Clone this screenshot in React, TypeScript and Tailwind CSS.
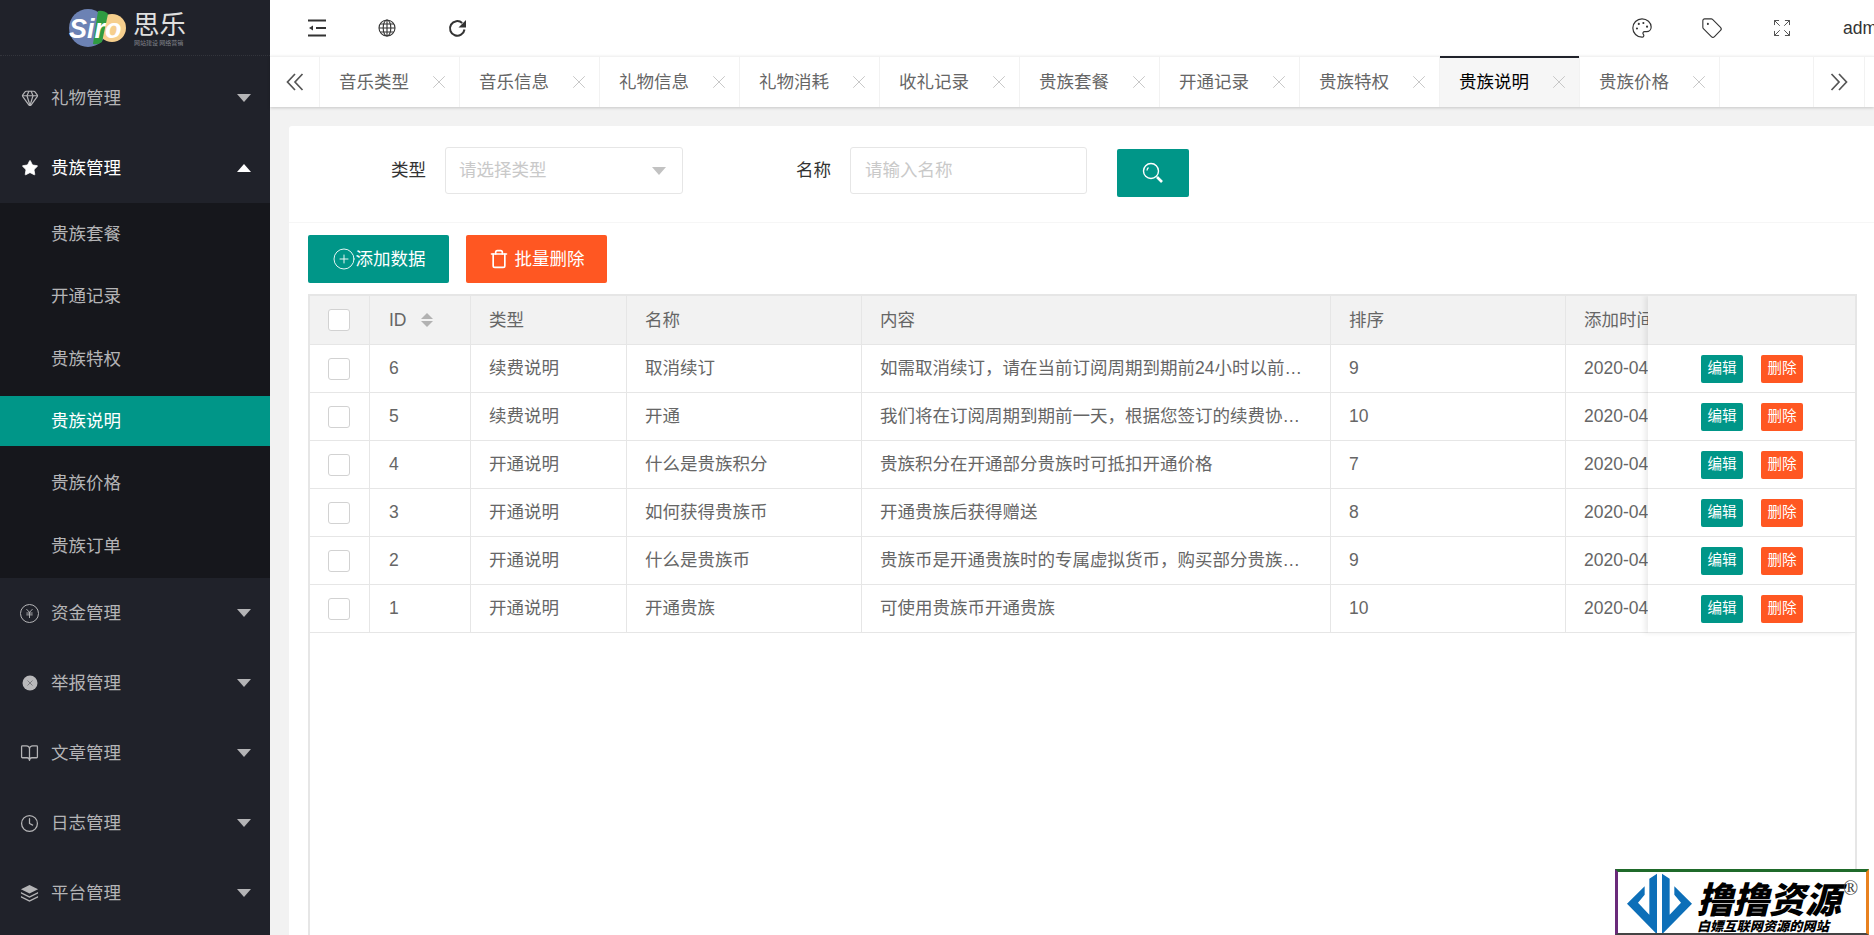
import React from "react";
import { Palette, Tag, Expand, X, Gem, Star, JapaneseYen, BookOpen, Clock, CirclePlus, Trash } from "lucide-react";

const FONT = "font-['Liberation_Sans','Noto_Sans_CJK_SC',sans-serif]";

const Caret = ({ up, light }: { up?: boolean; light?: boolean }) => (
  <span
    className={`w-0 h-0 border-x-[7.5px] border-x-transparent ${
      up ? "border-b-[8px] border-b-white" : light ? "border-t-[8px] border-t-[#c2c2c2]" : "border-t-[8px] border-t-[#b4b4b6]"
    }`}
  />
);

const CircleXFilled = () => (
  <svg width="18" height="18" viewBox="0 0 18 18">
    <circle cx="9" cy="9" r="7.5" fill="#b8b8ba" />
    <path d="M6.5 6.5l5 5M11.5 6.5l-5 5" stroke="#7b7c80" strokeWidth="1" />
  </svg>
);

const YenCircle = () => (
  <span className="flex items-center justify-center w-[19px] h-[19px] rounded-full border border-[#b4b4b6]">
    <JapaneseYen size={11} strokeWidth={2} />
  </span>
);

const LayersFilled = () => (
  <svg width="20" height="19" viewBox="0 0 20 19" fill="currentColor">
    <path d="M10 0.5L19 5l-9 4.5L1 5z" />
    <path d="M1 8l9 4.5L19 8v1.6l-9 4.5-9-4.5z" />
    <path d="M1 12l9 4.5 9-4.5v1.6l-9 4.5-9-4.5z" />
  </svg>
);

const MenuItem = ({ icon, label, open }: { icon: React.ReactNode; label: string; open?: boolean }) => (
  <div className="h-[70px] flex items-center pl-[20px] pr-[19px] text-[17.5px]">
    <span className={`w-[19px] flex justify-center mr-[12px] ${open ? "text-white" : "text-[#b4b4b6]"}`}>{icon}</span>
    <span className={`flex-1 ${open ? "text-white" : "text-[#b4b4b6]"}`}>{label}</span>
    <Caret up={open} />
  </div>
);

const subItems = ["贵族套餐", "开通记录", "贵族特权", "贵族说明", "贵族价格", "贵族订单"];

const Logo = () => (
  <div className="h-[56px] flex items-center justify-start pl-[66px] border-b border-dotted border-[#33353c]">
    <svg width="122" height="48" viewBox="0 0 122 48">
      <circle cx="22" cy="24" r="19" fill="#6c82b4" />
      <circle cx="46" cy="24" r="14" fill="#f6cf8d" />
      <path d="M32 7 Q38 6 42 10 L36 38 Q32 41 27 40 Z" fill="#2f9b41" />
      <text x="3" y="34" fill="#fff" fontSize="27" fontWeight="700" fontStyle="italic" fontFamily="Liberation Sans">Siro</text>
      <text x="67" y="30" fill="#e0e0e0" fontSize="26.5" fontFamily="Noto Sans CJK SC">思乐</text>
      <text x="68" y="41" fill="#80828a" fontSize="6" fontFamily="Noto Sans CJK SC">网站建设 网络营销</text>
    </svg>
  </div>
);

const Sidebar = () => (
  <aside className="w-[270px] shrink-0 h-full bg-[#20222a] overflow-hidden">
    <Logo />
    <div className="pt-[7px]">
      <MenuItem icon={<Gem size={18} strokeWidth={1.6} />} label="礼物管理" />
      <MenuItem icon={<Star size={18} fill="currentColor" strokeWidth={1} />} label="贵族管理" open />
      <div className="bg-[#16171c] h-[375px] flex flex-col pt-[6px]">
        {subItems.map((s) => (
          <div
            key={s}
            className={`h-[50px] mb-[12.4px] shrink-0 flex items-center pl-[51px] text-[17.5px] ${
              s === "贵族说明" ? "bg-[#009688] text-white" : "text-[#b4b4b6]"
            }`}
          >
            {s}
          </div>
        ))}
      </div>
      <MenuItem icon={<YenCircle />} label="资金管理" />
      <MenuItem icon={<CircleXFilled />} label="举报管理" />
      <MenuItem icon={<BookOpen size={20} strokeWidth={1.6} />} label="文章管理" />
      <MenuItem icon={<Clock size={19} strokeWidth={1.6} />} label="日志管理" />
      <MenuItem icon={<LayersFilled />} label="平台管理" />
    </div>
  </aside>
);

const IndentIcon = () => (
  <svg width="20" height="18" viewBox="0 0 20 18" fill="none" stroke="currentColor" strokeWidth="2">
    <path d="M1 1.5h18M9 9h10M1 16.5h18" />
    <path d="M2 9l4-2.5v5z" fill="currentColor" stroke="none" />
  </svg>
);

const GlobeIcon = () => (
  <svg width="18" height="18" viewBox="0 0 18 18" fill="none" stroke="currentColor" strokeWidth="1.1">
    <circle cx="9" cy="9" r="8" />
    <ellipse cx="9" cy="9" rx="3.8" ry="8" />
    <path d="M9 1v16M1 9h16M2.2 5h13.6M2.2 13h13.6" />
  </svg>
);

const ReloadIcon = () => (
  <svg width="19" height="19" viewBox="0 0 19 19" fill="none" stroke="currentColor" strokeWidth="2">
    <path d="M16.5 10.5A7.3 7.3 0 1 1 14.2 4" />
    <path d="M18 1v7.5h-7.5z" fill="currentColor" stroke="none" />
  </svg>
);

const TopBar = () => (
  <div className="h-[56px] flex items-center bg-white text-[#333]">
    <div className="w-[70px] flex justify-center ml-[12px]"><IndentIcon /></div>
    <div className="w-[70px] flex justify-center"><GlobeIcon /></div>
    <div className="w-[70px] flex justify-center"><ReloadIcon /></div>
    <div className="flex-1" />
    <div className="w-[70px] flex justify-center"><Palette size={22} strokeWidth={1.3} /></div>
    <div className="w-[70px] flex justify-center"><Tag size={22} strokeWidth={1.2} /></div>
    <div className="w-[70px] flex justify-center text-[#555]"><Expand size={20} strokeWidth={1.2} /></div>
    <div className="w-[57px] pl-[26px] overflow-hidden whitespace-nowrap text-[17.5px]">admin</div>
  </div>
);

const tabs = ["音乐类型", "音乐信息", "礼物信息", "礼物消耗", "收礼记录", "贵族套餐", "开通记录", "贵族特权", "贵族说明", "贵族价格"];

const DoubleChevron = ({ right }: { right?: boolean }) => (
  <svg width="18" height="18" viewBox="0 0 18 18" fill="none" stroke="currentColor" strokeWidth="1.7" className={right ? "rotate-180" : ""}>
    <path d="M9 1L1.5 9 9 17M16.5 1L9 9l7.5 8" />
  </svg>
);

const TabBar = () => (
  <div className="h-[51px] shrink-0 flex bg-white border-t border-[#f2f2f2] shadow-[0_1px_3px_rgba(0,0,0,0.18)] relative z-10 text-[17.5px] text-[#666]">
    <div className="w-[50px] border-r border-[#f2f2f2] flex items-center justify-center text-[#555]">
      <DoubleChevron />
    </div>
    {tabs.map((t) => {
      const active = t === "贵族说明";
      return (
        <div
          key={t}
          className={`relative w-[140px] flex items-center pl-[19px] border-r border-[#f2f2f2] ${active ? "bg-[#f6f6f6] text-black" : ""}`}
        >
          {active && <span className="absolute -top-px left-0 right-0 h-[2px] bg-[#20222a]" />}
          <span className="flex-1">{t}</span>
          <X size={22} strokeWidth={0.9} className="mr-[9px] text-[#bcbcbc]" />
        </div>
      );
    })}
    <div className="flex-1" />
    <div className="w-[50px] border-x border-[#f2f2f2] flex items-center justify-center text-[#555] mr-[9px] box-content">
      <DoubleChevron right />
    </div>
  </div>
);

const SearchIcon = () => (
  <svg width="22" height="22" viewBox="0 0 22 22" fill="none" stroke="currentColor">
    <circle cx="9" cy="9" r="7.5" strokeWidth="1.4" />
    <path d="M5 8.5a4 4 0 0 1 1.5-3" strokeWidth="1.2" />
    <path d="M15 15l5 5" strokeWidth="2.6" />
  </svg>
);

const SearchForm = () => (
  <div className="h-[97px] border-b border-[#f6f6f6] flex items-center text-[17.5px] text-[#333] pb-[7px]">
    <span className="ml-[102px] w-[36px] whitespace-nowrap">类型</span>
    <div className="ml-[18px] w-[238px] h-[47px] border border-[#e6e6e6] rounded-[3px] flex items-center pl-[13px] pr-[16px] text-[#c9c9c9] justify-between">
      <span>请选择类型</span>
      <Caret light />
    </div>
    <span className="ml-[113px] w-[36px] whitespace-nowrap">名称</span>
    <div className="ml-[18px] w-[237px] h-[47px] border border-[#e6e6e6] rounded-[3px] flex items-center pl-[14px] text-[#c9c9c9]">
      请输入名称
    </div>
    <div className="ml-[30px] mt-[5px] w-[72px] h-[48px] bg-[#009688] rounded-[2px] flex items-center justify-center text-white">
      <SearchIcon />
    </div>
  </div>
);

const rows = [
  ["6", "续费说明", "取消续订", "如需取消续订，请在当前订阅周期到期前24小时以前…", "9"],
  ["5", "续费说明", "开通", "我们将在订阅周期到期前一天，根据您签订的续费协…", "10"],
  ["4", "开通说明", "什么是贵族积分", "贵族积分在开通部分贵族时可抵扣开通价格", "7"],
  ["3", "开通说明", "如何获得贵族币", "开通贵族后获得赠送", "8"],
  ["2", "开通说明", "什么是贵族币", "贵族币是开通贵族时的专属虚拟货币，购买部分贵族…", "9"],
  ["1", "开通说明", "开通贵族", "可使用贵族币开通贵族", "10"],
];

const widths = ["w-[60px]", "w-[101px]", "w-[156px]", "w-[235px]", "w-[469px]", "w-[235px]"];

const Check = () => <span className="block w-[22px] h-[22px] bg-white border border-[#d2d2d2] rounded-[3px] -ml-[2px]" />;

const Cell = ({ i, children }: { i: number; children?: React.ReactNode }) => (
  <div className={`${widths[i]} shrink-0 h-full border-r border-[#e6e6e6] flex items-center ${i === 0 ? "justify-center" : i === 1 ? "pl-[19px]" : "pl-[18px]"} whitespace-nowrap overflow-hidden`}>
    {children}
  </div>
);

const DateCell = ({ children }: { children: React.ReactNode }) => (
  <div className="w-[82px] shrink-0 pl-[18px] flex items-center whitespace-nowrap overflow-hidden">{children}</div>
);

const Table = () => (
  <div className="relative mx-[19px] mt-[11px] flex-1 border-2 border-b-0 border-[#e6e6e6] overflow-hidden text-[17.5px] text-[#666] w-[1549px]">
    <div className="h-[49px] bg-[#f2f2f2] border-b border-[#e6e6e6] flex">
      <Cell i={0}><Check /></Cell>
      <Cell i={1}>
        ID
        <span className="ml-[14px] flex flex-col gap-[2px]">
          <span className="w-0 h-0 border-x-[6px] border-x-transparent border-b-[6px] border-b-[#b2b2b2]" />
          <span className="w-0 h-0 border-x-[6px] border-x-transparent border-t-[6px] border-t-[#b2b2b2]" />
        </span>
      </Cell>
      <Cell i={2}>类型</Cell>
      <Cell i={3}>名称</Cell>
      <Cell i={4}>内容</Cell>
      <Cell i={5}>排序</Cell>
      <DateCell>添加时间</DateCell>
    </div>
    {rows.map((r) => (
      <div key={r[0]} className="h-[48px] border-b border-[#e6e6e6] flex">
        <Cell i={0}><Check /></Cell>
        <Cell i={1}>{r[0]}</Cell>
        <Cell i={2}>{r[1]}</Cell>
        <Cell i={3}>{r[2]}</Cell>
        <Cell i={4}>{r[3]}</Cell>
        <Cell i={5}>{r[4]}</Cell>
        <DateCell>2020-04-12 10:21:36</DateCell>
      </div>
    ))}
    {/* fixed right column lies over the scrolling table */}
    <div className="absolute top-0 right-0 w-[207px] bg-white shadow-[-3px_0_5px_rgba(0,0,0,0.08)]">
      <div className="h-[49px] bg-[#f2f2f2] border-b border-[#e6e6e6]" />
      {rows.map((r) => (
        <div key={r[0]} className="h-[48px] border-b border-[#e6e6e6] flex items-center pl-[53px] gap-[18px] text-[14.5px] text-white">
          <span className="w-[42px] h-[28px] bg-[#009688] rounded-[2px] flex items-center justify-center">编辑</span>
          <span className="w-[42px] h-[28px] bg-[#ff5722] rounded-[2px] flex items-center justify-center">删除</span>
        </div>
      ))}
    </div>
  </div>
);

const Watermark = () => (
  <div className="absolute left-[1615px] top-[869px] w-[254px] h-[66px] bg-white border-[3px] border-b-[2px] border-l-[#6a2a7a] border-t-[#1f6a2a] border-r-[#e8811f] border-b-[#444] flex items-start text-black overflow-hidden">
    <svg width="77" height="61" viewBox="48 60 231 183" className="shrink-0" fill="#0d6fb8">
      <path d="M75 155L128 103V128L108 152L142 188V80L165 65V243L168 250Z" />
      <path d="M270 155L217 103V128L237 152L203 188V80L180 65V243L177 250Z" />
    </svg>
    <div className="flex flex-col ml-[2px] pt-[6px] relative">
      <div className="flex items-start">
        <span className="text-[36px] leading-[38px] font-black italic whitespace-nowrap font-['Noto_Sans_CJK_SC',sans-serif]">撸撸资源</span>
        <span className="text-[20px] leading-[20px] text-[#444] ml-[2px] font-['Liberation_Serif',serif]">®</span>
      </div>
      <span className="mt-[3px] text-[13.2px] leading-[14px] font-black italic whitespace-nowrap font-['Noto_Sans_CJK_SC',sans-serif]">白嫖互联网资源的网站</span>
    </div>
  </div>
);

export default function App() {
  return (
    <div className={`${FONT} relative w-[1874px] h-[935px] flex overflow-hidden bg-[#f2f2f2]`}>
      <Sidebar />
      <main className="flex-1 min-w-0 flex flex-col h-full">
        <TopBar />
        <TabBar />
        <div className="flex-1 min-h-0 pt-[19px] pl-[19px] flex flex-col">
          <div className="flex-1 min-h-0 bg-white rounded-tl-[3px] flex flex-col">
            <SearchForm />
            <div className="flex gap-[17px] pl-[19px] pt-[12px]">
              <div className="w-[141px] h-[48px] bg-[#009688] text-white rounded-[2px] flex items-center justify-center text-[17.5px]">
                <CirclePlus size={24} strokeWidth={0.9} />添加数据
              </div>
              <div className="w-[141px] h-[48px] bg-[#ff5722] text-white rounded-[2px] flex items-center justify-center text-[17.5px] gap-[6px]">
                <Trash size={20} strokeWidth={2} />批量删除
              </div>
            </div>
            <Table />
          </div>
        </div>
      </main>
      <Watermark />
    </div>
  );
}
